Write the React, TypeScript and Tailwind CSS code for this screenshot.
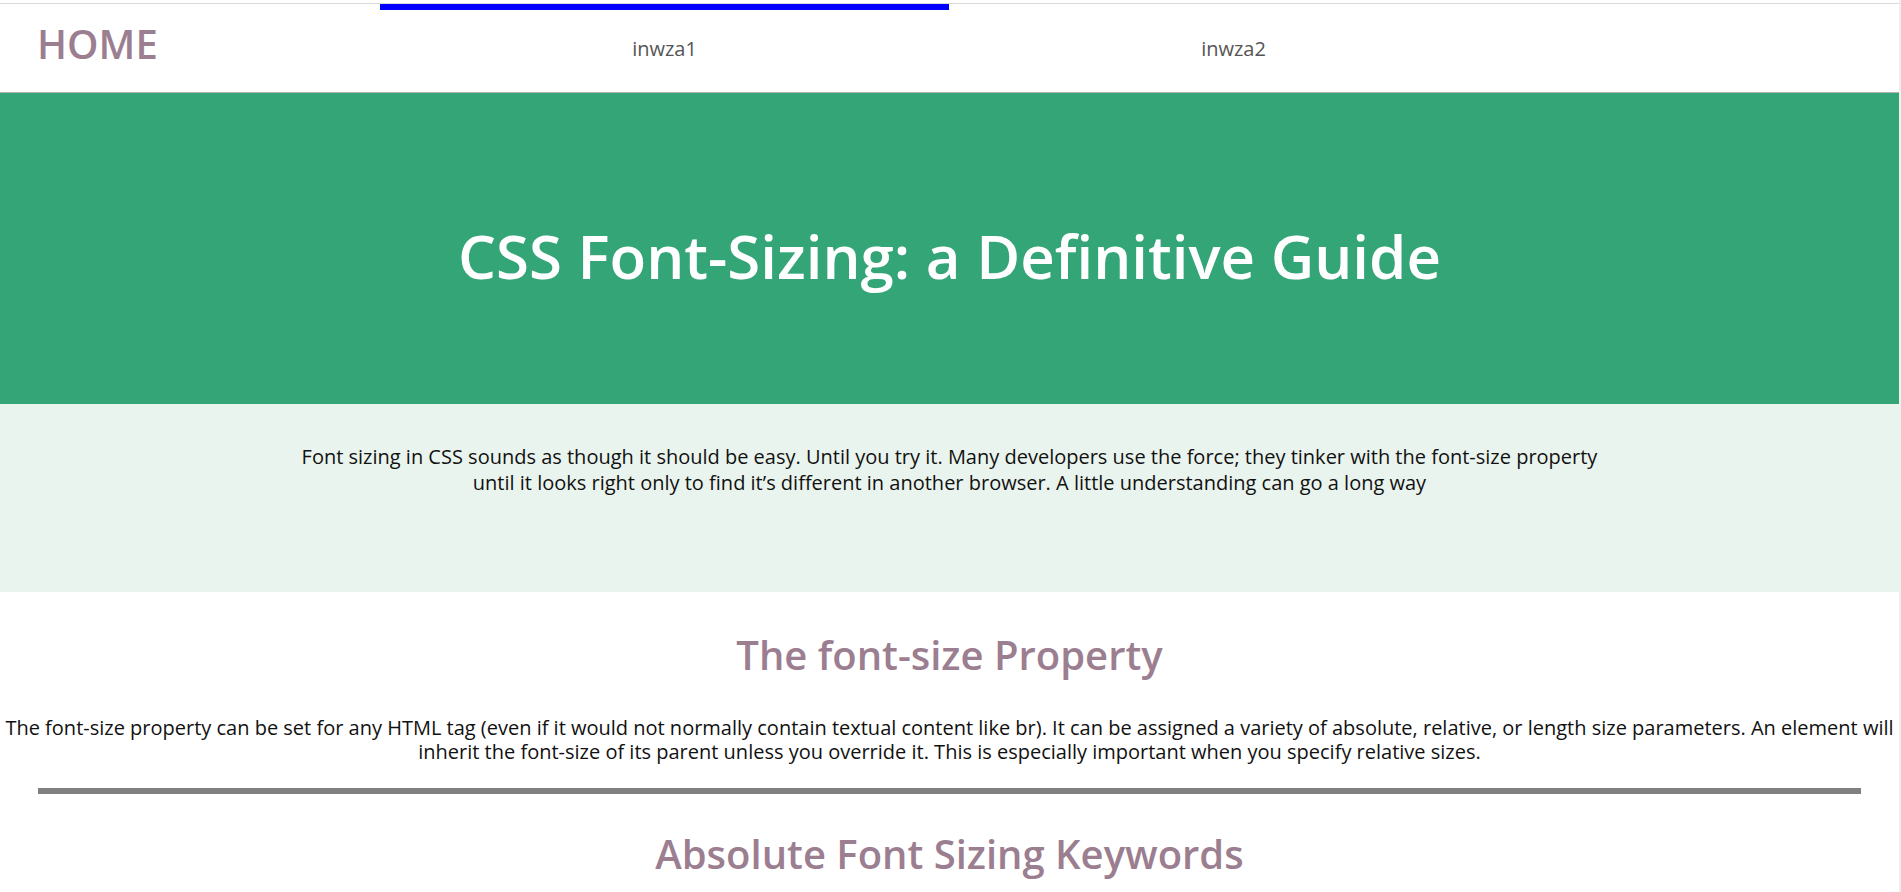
import React from "react";

const App = () => {
  return (
    <div className="flex min-h-screen bg-white font-['Open_Sans',sans-serif]">
      <div className="flex-1 min-w-0 pt-[3px]">
        {/* Top nav */}
        <div className="flex h-[90px] border-t border-b border-t-[#dadada] border-b-[#b4b4b4]">
          <div className="w-[380px] pl-[37px] pt-[13px] text-[40px] font-semibold leading-[1.362] text-[#9b7e90]">
            HOME
          </div>
          <div className="w-[569px] border-t-[6px] border-[#0000ff] pt-[24px] text-center text-[20px] text-[#555]">
            inwza1
          </div>
          <div className="w-[569px] border-t-[6px] border-transparent pt-[24px] text-center text-[20px] text-[#555]">
            inwza2
          </div>
        </div>

        {/* Hero */}
        <div className="h-[311px] bg-[#34a577] pt-[123px] text-center text-[60px] font-semibold leading-[1.362] text-white">
          CSS Font-Sizing: a Definitive Guide
        </div>

        {/* Intro */}
        <div className="h-[188px] bg-[#eaf4ee] pt-[40px]">
          <p className="mx-auto w-[70%] text-center text-[20px] leading-[26px] text-[#111]">
            Font sizing in CSS sounds as though it should be easy. Until you try it. Many developers use the force; they tinker with the font-size property until it looks right only to find it’s different in another browser. A little understanding can go a long way
          </p>
        </div>

        {/* Font-size property */}
        <div className="pt-[36px] text-center">
          <h2 className="text-[40px] font-semibold leading-[1.362] text-[#9b7e90]">The font-size Property</h2>
          <p className="mt-[34px] text-[20px] leading-[24px] text-[#111]">
            The font-size property can be set for any HTML tag (even if it would not normally contain textual content like br). It can be assigned a variety of absolute, relative, or length size parameters. An element will inherit the font-size of its parent unless you override it. This is especially important when you specify relative sizes.
          </p>
          <div className="mx-[38px] mt-[24px] h-[6px] bg-[#808080]" />
          <h2 className="mt-[33px] text-[40px] font-semibold leading-[1.362] text-[#9b7e90]">Absolute Font Sizing Keywords</h2>
        </div>
      </div>
      <div className="w-[2px] shrink-0 bg-[#efefef]" />
    </div>
  );
};

export default App;
